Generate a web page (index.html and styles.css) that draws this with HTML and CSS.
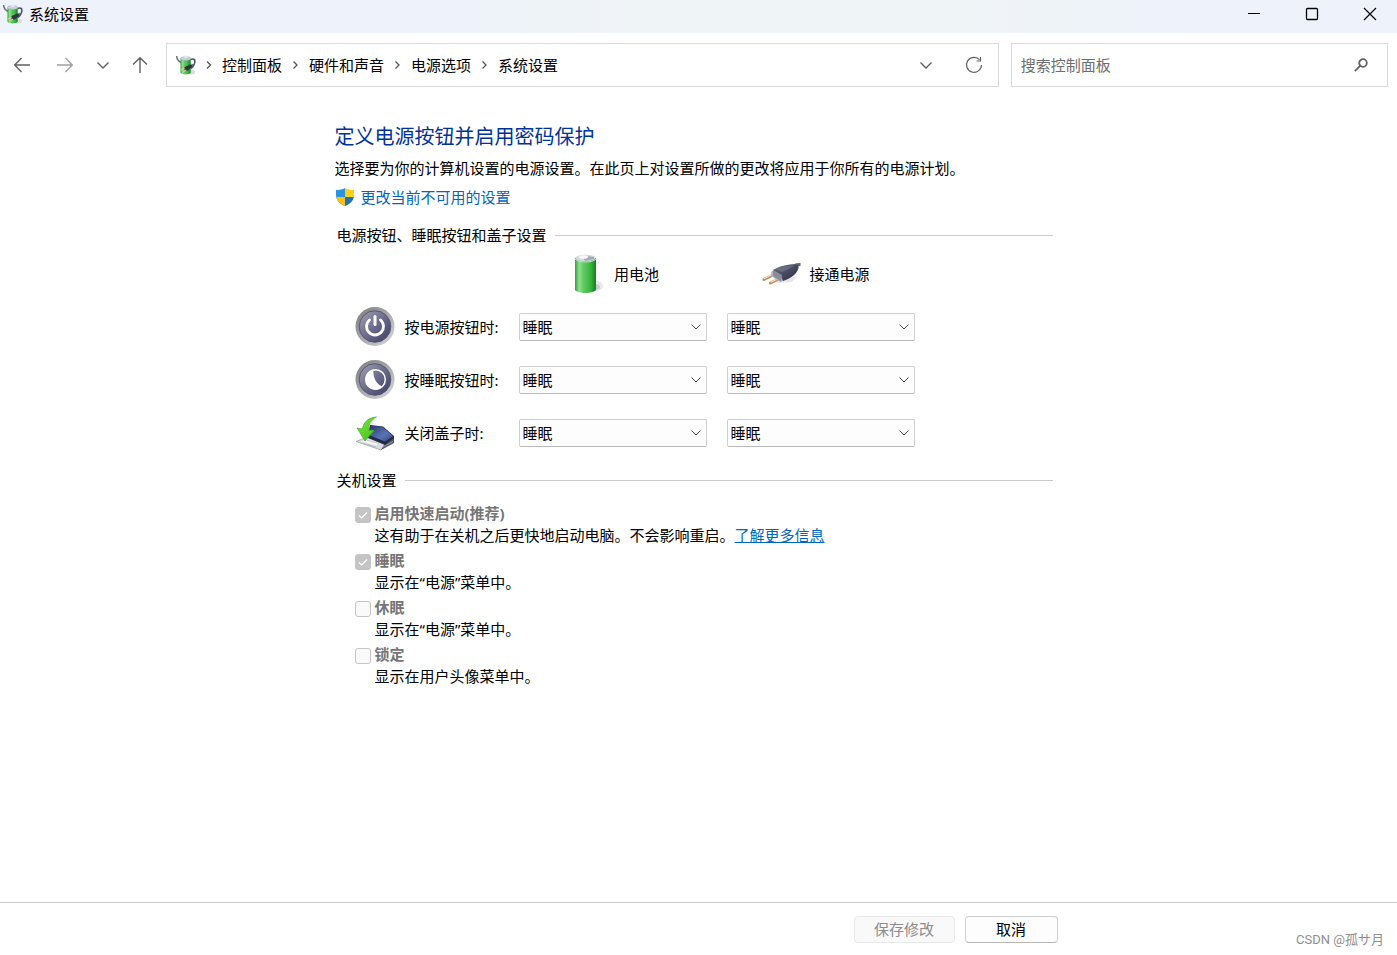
FILE: index.html
```html
<!DOCTYPE html>
<html lang="zh-CN">
<head>
    <meta charset="UTF-8">
    <meta name="viewport" content="width=device-width, initial-scale=1">
    <title>系统设置</title>
    <link rel="stylesheet" href="styles.css">
</head>
<body>

<!-- 共用的图标和渐变 -->
<svg class="svg-defs" aria-hidden="true">
    <defs>
        <linearGradient id="green" x1="0" x2="1" y1="0" y2="0">
            <stop offset="0" stop-color="#2f9f38"/>
            <stop offset=".2" stop-color="#8fe08e"/>
            <stop offset=".4" stop-color="#5fcb62"/>
            <stop offset=".75" stop-color="#38b33f"/>
            <stop offset="1" stop-color="#167d22"/>
        </linearGradient>
        <linearGradient id="ring" x1="0" x2="1" y1="0" y2="1">
            <stop offset="0" stop-color="#77777d"/>
            <stop offset=".5" stop-color="#a9a9ad"/>
            <stop offset="1" stop-color="#dadadc"/>
        </linearGradient>
        <linearGradient id="face" x1="0" x2="1" y1="0" y2="1">
            <stop offset="0" stop-color="#a3a3b4"/>
            <stop offset=".5" stop-color="#6b6b8d"/>
            <stop offset="1" stop-color="#3c3c63"/>
        </linearGradient>
        <linearGradient id="lid" x1="0" x2="1" y1="0" y2="1">
            <stop offset="0" stop-color="#28375f"/>
            <stop offset=".6" stop-color="#5874b8"/>
            <stop offset="1" stop-color="#35467a"/>
        </linearGradient>
        <linearGradient id="arrow" x1="0" x2="1" y1="0" y2="1">
            <stop offset="0" stop-color="#7bea3a"/>
            <stop offset="1" stop-color="#40bd1c"/>
        </linearGradient>
        <linearGradient id="plugBody" x1="0" x2="1" y1="0" y2="1">
            <stop offset="0" stop-color="#6a6c80"/>
            <stop offset="1" stop-color="#262940"/>
        </linearGradient>
        <symbol id="power-options" viewBox="0 0 20 20">
            <ellipse cx="14.500" cy="17" rx="4.500" ry="2.500" fill="#d8dadd"/>
            <path d="M14.500 4.500c4-1.500 5 .5 4 4-.7 2-2 4-3.500 5" fill="none" stroke="#4b5661" stroke-width="1.600"/>
            <path d="M.6 1c.2 3 1.500 5 4.400 6.500" fill="none" stroke="#66717a" stroke-width="1.500"/>
            <path d="M4.500 3.500v14.300c1.500 2.200 8.700 2.200 10.200 0V3.500z" fill="url(#green)"/>
            <ellipse cx="9.600" cy="3.500" rx="5.100" ry="1.900" fill="#c9d5da" stroke="#93a4a9" stroke-width=".5"/>
            <ellipse cx="9.600" cy="1.800" rx="2.200" ry="1.300" fill="#dfe8ed"/>
            <path d="M8.300 12.200l5.200-2.400 3.800-.6-1.800 3.300-4.500 3.500-2.400-1z" fill="#303343"/>
            <path d="M8.500 13.200l-3.500 1.800M10.200 15l-3 1.800" stroke="#e0c88c" stroke-width="1.100"/>
        </symbol>
        <symbol id="crumb" viewBox="0 0 8 10">
            <path d="M2 1.500L5.500 5 2 8.500" fill="none" stroke="#555" stroke-width="1.300"/>
        </symbol>
        <symbol id="chevron" viewBox="0 0 14 14">
            <path d="M1.500 4.500L7 10l5.500-5.500" fill="none" stroke="currentColor" stroke-width="1.400"/>
        </symbol>
    </defs>
</svg>

<!-- 标题栏 -->
<header class="titlebar">
    <svg class="app-icon"><use href="#power-options"/></svg>
    <span class="window-title">系统设置</span>
    <div class="window-controls">
        <button type="button" aria-label="最小化">
            <svg width="14" height="14" viewBox="0 0 14 14"><path d="M1 6.500h12" stroke="#000"/></svg>
        </button>
        <button type="button" aria-label="最大化">
            <svg width="14" height="14" viewBox="0 0 14 14"><rect x="1.500" y="1.500" width="11" height="11" rx="1" fill="none" stroke="#000" stroke-width="1.300"/></svg>
        </button>
        <button type="button" aria-label="关闭">
            <svg width="14" height="14" viewBox="0 0 14 14"><path d="M1 1l12 12M13 1L1 13" stroke="#000" stroke-width="1.200"/></svg>
        </button>
    </div>
</header>

<!-- 导航栏 -->
<div class="toolbar">
    <nav class="nav-buttons">
        <button type="button" class="nav-arrow" aria-label="后退">
            <svg width="18" height="18" viewBox="0 0 18 18"><path d="M17 9H2M8.500 2L1.700 9l6.800 7" fill="none" stroke="currentColor" stroke-width="1.400"/></svg>
        </button>
        <button type="button" class="nav-arrow nav-off" aria-label="前进">
            <svg width="18" height="18" viewBox="0 0 18 18"><path d="M1 9h15M9.500 2l6.800 7-6.800 7" fill="none" stroke="currentColor" stroke-width="1.400"/></svg>
        </button>
        <button type="button" class="nav-recent" aria-label="最近浏览的位置">
            <svg width="14" height="14"><use href="#chevron"/></svg>
        </button>
        <button type="button" class="nav-up" aria-label="向上">
            <svg width="18" height="18" viewBox="0 0 18 18"><path d="M9 17V2M2 8.500l7-6.800 7 6.800" fill="none" stroke="currentColor" stroke-width="1.400"/></svg>
        </button>
    </nav>
    <div class="address">
        <svg class="app-icon"><use href="#power-options"/></svg>
        <svg class="crumb-arrow"><use href="#crumb"/></svg>
        <a href="#">控制面板</a>
        <svg class="crumb-arrow"><use href="#crumb"/></svg>
        <a href="#">硬件和声音</a>
        <svg class="crumb-arrow"><use href="#crumb"/></svg>
        <a href="#">电源选项</a>
        <svg class="crumb-arrow"><use href="#crumb"/></svg>
        <a href="#">系统设置</a>
        <div class="address-buttons">
            <button type="button" aria-label="以前的位置">
                <svg width="14" height="14"><use href="#chevron"/></svg>
            </button>
            <button type="button" aria-label="刷新">
                <svg width="18" height="18" viewBox="0 0 18 18"><path d="M14.500 3.700A7.500 7.500 0 1 0 16.500 9M15.500 1v4h-4" fill="none" stroke="currentColor" stroke-width="1.200"/></svg>
            </button>
        </div>
    </div>
    <form class="search">
        <input type="text" placeholder="搜索控制面板" aria-label="搜索控制面板">
        <button type="submit" aria-label="搜索">
            <svg width="16" height="16" viewBox="0 0 16 16"><circle cx="10" cy="6" r="3.800" fill="none" stroke="currentColor" stroke-width="1.800"/><path d="M7.300 8.700L1.800 14.200" stroke="currentColor" stroke-width="1.800"/></svg>
        </button>
    </form>
</div>

<main class="content">
    <h1>定义电源按钮并启用密码保护</h1>
    <p class="intro">选择要为你的计算机设置的电源设置。在此页上对设置所做的更改将应用于你所有的电源计划。</p>
    <a class="admin-link" href="#">
        <svg width="20" height="20" viewBox="0 0 20 20">
            <path d="M10 1c2.500 1.500 5.500 2 9 2v5c0 5.500-4 9-9 11z" fill="#fbd016"/>
            <path d="M10 1C7.500 2.500 4.500 3 1 3v5c0 5.500 4 9 9 11z" fill="#2b93dc"/>
            <path d="M1.300 10H10v9c-4.500-1.800-8-4.800-8.700-9z" fill="#fbbf1b"/>
            <path d="M10 10h8.700C18 14.200 14.500 17.200 10 19z" fill="#1b73bd"/>
        </svg>
        更改当前不可用的设置
    </a>

    <section>
        <h2>电源按钮、睡眠按钮和盖子设置</h2>
        <div class="power-grid">
            <div class="power-source on-battery">
                <svg width="40" height="40" viewBox="0 0 40 40">
                    <ellipse cx="30" cy="32" rx="7" ry="5" fill="#e8e8e8"/>
                    <ellipse cx="29" cy="33" rx="5" ry="3" fill="#c8c8c8"/>
                    <path d="M9 4v32c3 4 18 4 21 0V4z" fill="url(#green)"/>
                    <path d="M9 5c3 4 18 4 21 0" fill="none" stroke="#b9e8ba" stroke-width="1"/>
                    <ellipse cx="19.500" cy="4" rx="10.300" ry="3.300" fill="#d3d9e0"/>
                    <path d="M20 2l8 1v2l-8 2c-3-1-3-4 0-5z" fill="#a2abba"/>
                    <ellipse cx="17.500" cy="3" rx="4.500" ry="1.800" fill="#f6f7fb"/>
                </svg>
                用电池
            </div>
            <div class="power-source plugged-in">
                <svg width="40" height="40" viewBox="0 0 40 40">
                    <path d="M14 29l17-1 6-6-10 2z" fill="#e6e6e8"/>
                    <path d="M32 13c3-2.500 4-2.500 7.500-2.500" fill="none" stroke="#66686d" stroke-width="3"/>
                    <path d="M3 25.500L13 20.500M9.500 29L19 24.500" stroke="#bb9060" stroke-width="3" stroke-linecap="round"/>
                    <path d="M3 24.800L13 19.800M9.800 28.200L19 23.800" stroke="#f5dcba" stroke-width="1.200"/>
                    <path d="M10 18l4-3 8 7v5l-3 1-9-6z" fill="#b5b7c0"/>
                    <path d="M12 16c5-3 11-5 17-5.500 5-.5 8 0 8.500 1.500.5 3-2 7-5 9.500-3 2.500-7 4.500-10.500 5.500l-2-5z" fill="url(#plugBody)"/>
                    <path d="M14 15.500c5-3 11-4 19-4-4 3-8 5-12 6.500z" fill="#777a90" opacity=".6"/>
                    <path d="M12 16l9 5-1 6.500-8-5.500z" fill="#8a8d99"/>
                </svg>
                接通电源
            </div>

            <div class="power-label">
                <svg width="40" height="40" viewBox="0 0 40 40">
                    <circle cx="20" cy="19.500" r="19.500" fill="url(#ring)"/>
                    <circle cx="20" cy="19.500" r="15.800" fill="url(#face)" stroke="#55556d" stroke-width="1"/>
                    <path d="M14.500 13a8.500 8.500 0 1 0 11 0" fill="none" stroke="#fff" stroke-width="2.800" stroke-linecap="round"/>
                    <path d="M20 9.500v8" stroke="#fff" stroke-width="3" stroke-linecap="round"/>
                </svg>
                按电源按钮时:
            </div>
            <select aria-label="按电源按钮时: 用电池">
                <option>不采取任何操作</option>
                <option selected>睡眠</option>
                <option>关机</option>
            </select>
            <select aria-label="按电源按钮时: 接通电源">
                <option>不采取任何操作</option>
                <option selected>睡眠</option>
                <option>关机</option>
            </select>

            <div class="power-label">
                <svg width="40" height="40" viewBox="0 0 40 40">
                    <circle cx="20" cy="19.500" r="19.500" fill="url(#ring)"/>
                    <circle cx="20" cy="19.500" r="15.800" fill="url(#face)" stroke="#55556d" stroke-width="1"/>
                    <circle cx="20.500" cy="19.500" r="9.800" fill="none" stroke="#fff" stroke-width="1.500"/>
                    <path d="M18.500 9.500a10.200 10.200 0 1 0 9.500 17c-6-1-10.500-9-9.500-17z" fill="#fff"/>
                </svg>
                按睡眠按钮时:
            </div>
            <select aria-label="按睡眠按钮时: 用电池">
                <option>不采取任何操作</option>
                <option selected>睡眠</option>
                <option>关机</option>
            </select>
            <select aria-label="按睡眠按钮时: 接通电源">
                <option>不采取任何操作</option>
                <option selected>睡眠</option>
                <option>关机</option>
            </select>

            <div class="power-label">
                <svg width="40" height="40" viewBox="0 0 40 40">
                    <path d="M1 28.500L12 24l20 6-6 7z" fill="#d9dce0" stroke="#94979c" stroke-width=".7"/>
                    <path d="M6 28.500l6-2.500 13 4-4 2.500z" fill="#f5f6f7"/>
                    <path d="M9 30.500l12 3.500M12 27l12 3.500" stroke="#a9adb3" stroke-width=".7"/>
                    <path d="M26 37l13-7v-7l-9 7z" fill="#4d5466"/>
                    <path d="M27 34.500l11-6" stroke="#aeb4c2" stroke-width=".8"/>
                    <path d="M15 12l13 1.500L39 23v2l-9 7-17-7v-3z" fill="#242c45"/>
                    <path d="M16 12.500l11.500 1.500L38 23l-8 5.500L14 22z" fill="url(#lid)"/>
                    <path d="M21.500 4C14 4.500 8.500 8.500 7.500 16L2 15l8 13 9-10.500-5.500-.5C13.500 11 15.500 7.500 21.500 4z" fill="url(#arrow)" stroke="#45ad2c" stroke-width=".7"/>
                </svg>
                关闭盖子时:
            </div>
            <select aria-label="关闭盖子时: 用电池">
                <option>不采取任何操作</option>
                <option selected>睡眠</option>
                <option>关机</option>
            </select>
            <select aria-label="关闭盖子时: 接通电源">
                <option>不采取任何操作</option>
                <option selected>睡眠</option>
                <option>关机</option>
            </select>
        </div>
    </section>

    <section>
        <h2>关机设置</h2>
        <div class="shutdown-list">
            <div class="shutdown-item">
                <input type="checkbox" id="fastStartup" checked disabled>
                <label for="fastStartup">启用快速启动(推荐)</label>
                <p>这有助于在关机之后更快地启动电脑。不会影响重启。<a href="#">了解更多信息</a></p>
            </div>
            <div class="shutdown-item">
                <input type="checkbox" id="sleep" checked disabled>
                <label for="sleep">睡眠</label>
                <p>显示在“电源”菜单中。</p>
            </div>
            <div class="shutdown-item">
                <input type="checkbox" id="hibernate" disabled>
                <label for="hibernate">休眠</label>
                <p>显示在“电源”菜单中。</p>
            </div>
            <div class="shutdown-item">
                <input type="checkbox" id="lock" disabled>
                <label for="lock">锁定</label>
                <p>显示在用户头像菜单中。</p>
            </div>
        </div>
    </section>
</main>

<footer class="footer">
    <div class="footer-buttons">
        <button type="button" class="btn btn-save" disabled>保存修改</button>
        <button type="button" class="btn">取消</button>
    </div>
    <span class="watermark">CSDN @孤サ月</span>
</footer>

</body>
</html>
```
FILE: styles.css
```css
* {
    box-sizing: border-box;
}
body {
    margin: 0;
    min-height: 100vh;
    display: flex;
    flex-direction: column;
    background-color: #fff;
    color: #000;
    font-family: "Noto Sans", "Noto Sans CJK SC", sans-serif;
    font-size: 15px;
    line-height: 22px;
}
h1, h2, p {
    margin: 0;
    font-weight: normal;
}
button, input, select {
    font: inherit;
    color: inherit;
}
a {
    color: #0067c0;
}
svg {
    display: block;
    flex: none;
}
.svg-defs {
    position: absolute;
    width: 0;
    height: 0;
}
.app-icon {
    width: 20px;
    height: 20px;
}

/* 标题栏 */
.titlebar {
    display: flex;
    align-items: center;
    height: 33px;
    padding: 0 0 6px 3px;
    background: linear-gradient(to right, #eef2fb 30%, #eff4f7 45%, #eff4f7 70%, #eef2fb 85%);
    overflow: hidden;
}
.window-title {
    margin-left: 6px;
}
.window-controls {
    display: flex;
    margin-left: auto;
    margin-right: -2px;
}
.titlebar button,
.toolbar button {
    display: flex;
    align-items: center;
    justify-content: center;
    padding: 0;
    border: none;
    background: none;
    color: #606060;
}
.window-controls button {
    width: 58px;
    height: 28px;
}

/* 导航栏 */
.toolbar {
    display: flex;
    padding: 10px 9px 10px 0;
}
.nav-buttons {
    display: flex;
    margin-right: 7px;
}
.nav-buttons .nav-arrow {
    width: 43px;
}
.nav-buttons .nav-off {
    color: #999;
}
.toolbar .nav-off {
    color: #a0a0a0;
}
.nav-buttons .nav-recent {
    width: 34px;
}
.nav-buttons .nav-up {
    width: 39px;
}
.address,
.search {
    display: flex;
    align-items: center;
    height: 44px;
    border: 1px solid #d9d9d9;
}
.address {
    flex: 1;
    padding: 0 0 1px 9px;
}
.address a {
    color: #000;
    text-decoration: none;
}
.crumb-arrow {
    width: 27px;
    height: 10px;
}
.app-icon + .crumb-arrow {
    width: 26px;
}
.address-buttons {
    display: flex;
    margin-left: auto;
}
.address-buttons button {
    width: 48px;
    height: 42px;
}
.search {
    width: 27vw;
    margin-left: 12px;
}
.search input {
    flex: 1;
    min-width: 0;
    height: 42px;
    padding: 0 9px;
    border: none;
    outline: none;
    background: none;
}
.search input::placeholder {
    color: #6d6d6d;
    opacity: 1;
}
.search button {
    width: 52px;
    height: 42px;
}

/* 主要内容 */
.content {
    flex: 1;
    width: 100%;
    max-width: 728px;
    margin: 0 auto;
    padding: 26px 10px 20px 0;
}
h1 {
    color: #003399;
    font-size: 20px;
    line-height: 28px;
}
.intro {
    margin-top: 6px;
}
.admin-link {
    display: flex;
    align-items: center;
    gap: 6px;
    width: fit-content;
    margin-top: 7px;
    text-decoration: none;
}
h2 {
    display: flex;
    align-items: center;
    gap: 8px;
    margin-top: 16px;
    padding-left: 2px;
    font-size: 15px;
}
h2::after {
    content: "";
    flex: 1;
    border-top: 1px solid #cbcbcb;
}
.power-grid {
    display: grid;
    grid-template-columns: 144px 188px 188px;
    align-items: center;
    gap: 13px 20px;
    margin-top: 8px;
    padding-left: 20px;
}
.power-source {
    display: flex;
    align-items: center;
    justify-content: center;
    gap: 8px;
}
.on-battery {
    grid-column: 2;
}
.plugged-in {
    padding-right: 10px;
}
.power-label {
    display: flex;
    align-items: center;
    gap: 10px;
    white-space: nowrap;
}
select {
    width: 100%;
    height: 28px;
    padding: 0 24px 0 3px;
    border: 1px solid #cfcfcf;
    border-bottom-color: #b9b9b9;
    border-radius: 2px;
    appearance: none;
    background: #fdfdfd url("data:image/svg+xml,%3Csvg xmlns='http://www.w3.org/2000/svg' width='12' height='8'%3E%3Cpath d='M1.500 1.500L6 6l4.500-4.500' fill='none' stroke='%23444'/%3E%3C/svg%3E") no-repeat right 4px center;
}

/* 关机设置 */
.shutdown-list {
    display: grid;
    gap: 3px;
    margin-top: 11px;
    padding-left: 20px;
}
.shutdown-item {
    display: grid;
    grid-template-columns: 16px 1fr;
    column-gap: 4px;
    align-items: center;
}
.shutdown-item label {
    color: #767676;
    font-weight: bold;
}
.shutdown-item p {
    grid-column: 2;
}
.shutdown-item input {
    width: 16px;
    height: 16px;
    margin: 3px 0 0;
    border: 1px solid #c5c5c5;
    border-radius: 3px;
    appearance: none;
    background: #fafafa;
}
.shutdown-item input:checked {
    background: #c4c4c4 url("data:image/svg+xml,%3Csvg xmlns='http://www.w3.org/2000/svg' width='12' height='12'%3E%3Cpath d='M2 6.500L4.700 9 10 3.500' fill='none' stroke='white' stroke-width='1.200'/%3E%3C/svg%3E") no-repeat center;
}

/* 底部按钮 */
.footer {
    position: relative;
    padding: 13px 0 12px;
    border-top: 1px solid #cbcbcb;
}
.footer-buttons {
    display: flex;
    justify-content: flex-end;
    gap: 10px;
    max-width: 728px;
    margin: 0 auto;
    padding-right: 5px;
}
.btn {
    width: 93px;
    height: 27px;
    padding: 0 0 1px;
    border: 1px solid #cfcfcf;
    border-bottom-color: #b5b5b5;
    border-radius: 4px;
    background-color: #fdfdfd;
    line-height: 20px;
}
.btn-save {
    width: 101px;
    border-color: #e8e8e8;
    background-color: #f9f9f9;
    color: #8c8c8c;
}
.watermark {
    position: absolute;
    right: 13px;
    bottom: 4px;
    color: #8f8f8f;
    font-family: Roboto, "Noto Sans CJK SC", sans-serif;
    font-size: 13px;
}
```
